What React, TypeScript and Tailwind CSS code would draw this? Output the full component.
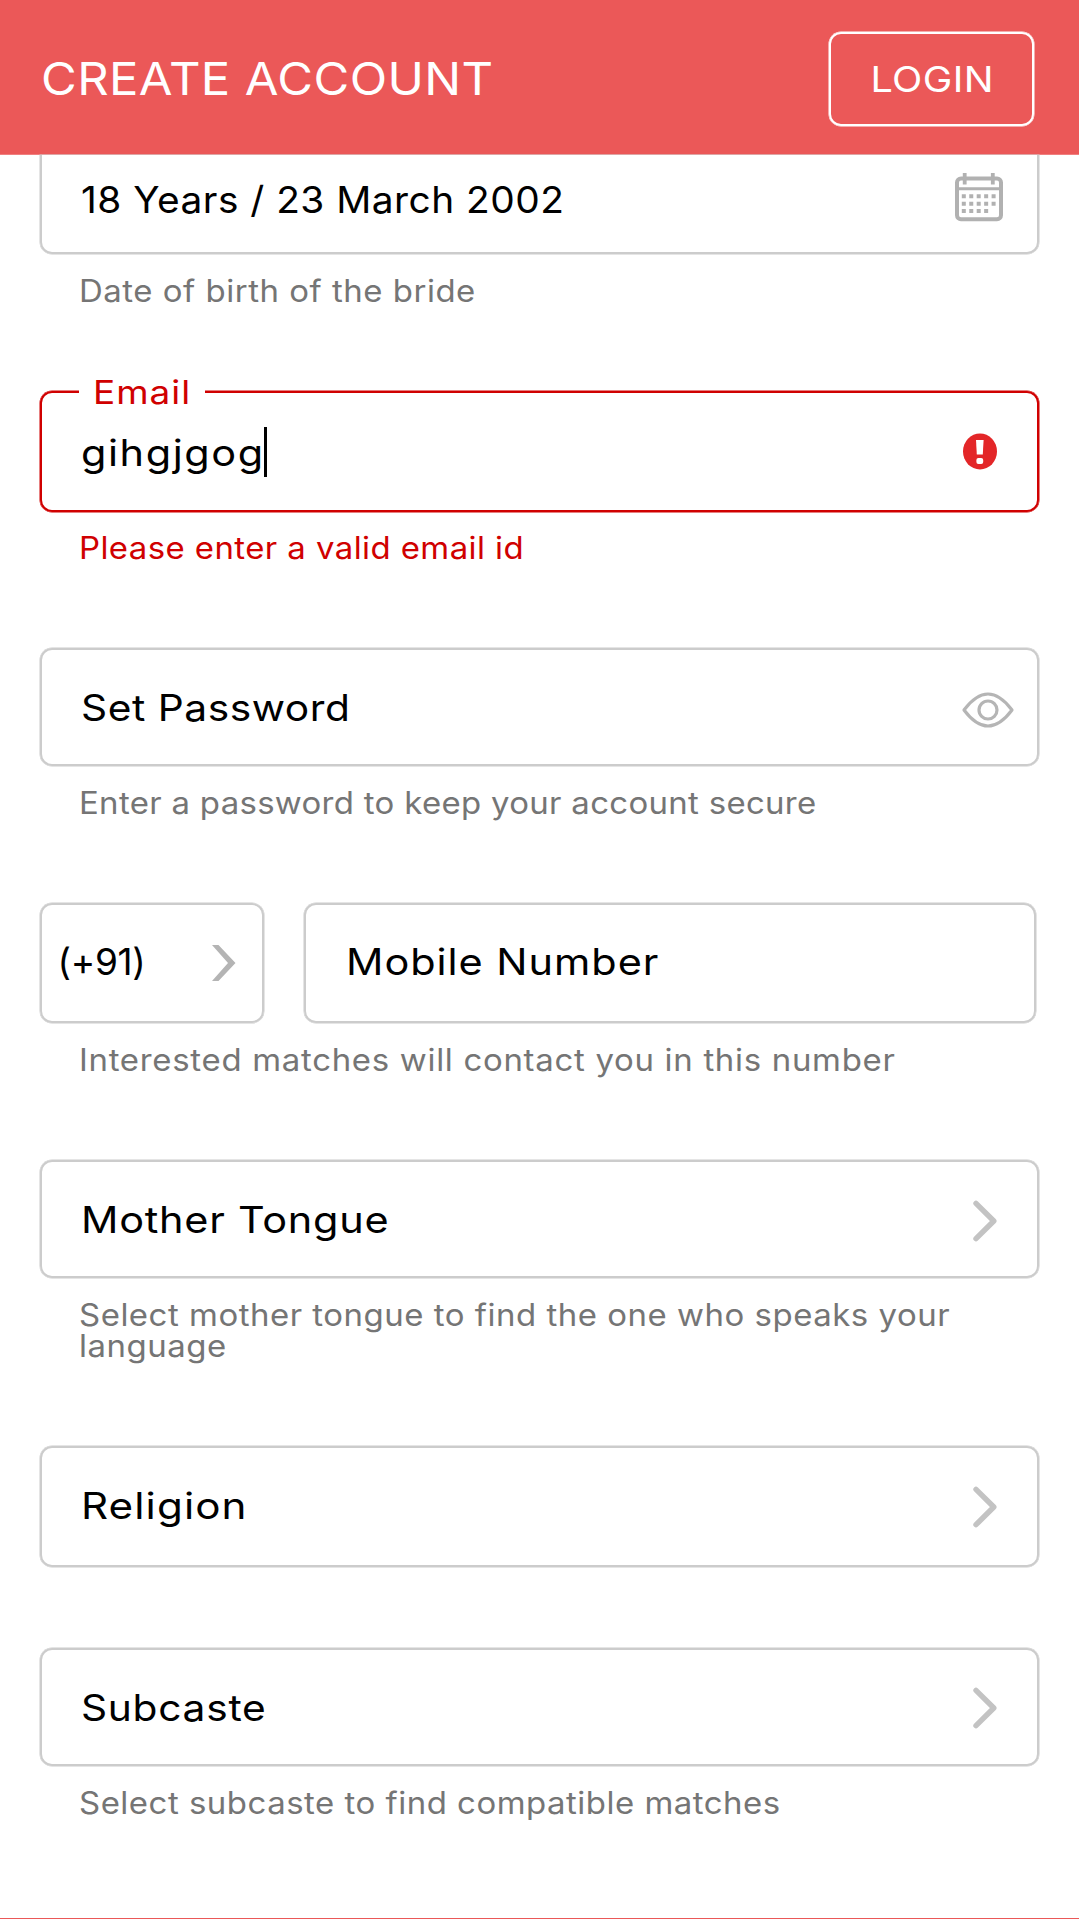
import type { ReactNode } from "react";
import clsx from "clsx";

function CalendarIcon() {
  return (
    <svg width="48" height="49" viewBox="0 0 48 49" fill="none" stroke="#b1b1b1">
      <rect x="2" y="5.5" width="44" height="40.7" rx="4" strokeWidth="4" />
      <path d="M2 15.800h44" strokeWidth="3" />
      <path d="M9.700 0v11.500M37.800 0v11.500" strokeWidth="3.800" />
      <g strokeWidth="4" strokeDasharray="4 3.450">
        <path d="M6.800 23.300h34" />
        <path d="M6.800 30.700h34" />
        <path d="M6.800 38.100h27" />
      </g>
    </svg>
  );
}

function ErrorIcon() {
  return (
    <svg width="35" height="37" viewBox="0 0 35 37">
      <ellipse cx="17" cy="18.4" rx="17" ry="18" fill="#e32628" />
      <path d="M13 7h7.600l-.8 14.500h-6z" fill="#fff" />
      <rect x="13.400" y="25" width="6.800" height="6" rx="2" fill="#fff" />
    </svg>
  );
}

function EyeIcon() {
  return (
    <svg width="52" height="36" viewBox="0 0 52 36" fill="none" stroke="#b5b5b5" strokeWidth="3.2">
      <path d="M2 18C9.500 8 17.500 2 26 2s16.500 6 24 16c-7.500 10-15.500 16-24 16S9.500 28 2 18z" strokeLinejoin="round" />
      <circle cx="26" cy="18" r="9" />
    </svg>
  );
}

function Chevron() {
  return (
    <svg width="24" height="42" viewBox="0 0 24 42" fill="none" stroke="#c3c3c3" strokeWidth="5.4" strokeLinecap="round" strokeLinejoin="round">
      <path d="M3 3.300 20.800 21 3 38.700" />
    </svg>
  );
}

function SharpChevron() {
  return (
    <svg width="24" height="38" viewBox="0 0 24 38" fill="#b4b4b4">
      <path d="M0 1h6.500L23.500 19 6.500 37H0l16-18z" />
    </svg>
  );
}

function Field({
  className,
  boxClass,
  text,
  textClass,
  icon,
  helper,
  helperClass,
  label,
  error,
  caret,
}: {
  className: string;
  boxClass: string;
  text: string;
  textClass: string;
  icon: ReactNode;
  helper?: string;
  helperClass?: string;
  label?: string;
  error?: boolean;
  caret?: boolean;
}) {
  return (
    <div className={className}>
      <div
        className={clsx(
          "relative ml-10 flex w-[999px] items-center justify-between border-2 pl-[39px]",
          error ? "border-[#d00000] shadow-[0_0_0_0.5px_#d00000]" : "border-[#cccccc] shadow-[0_0_0_0.5px_#cccccc]",
          boxClass,
        )}
      >
        {label && (
          <span className="absolute -top-[21px] left-[37px] w-[126px] bg-white pl-[14px] text-[33px] leading-[40px] text-[#d00000]">
            <span className="inline-block origin-left scale-x-[1.12] tracking-[0.87px]">{label}</span>
          </span>
        )}
        <span className="flex items-center">
          <span className={clsx("inline-block origin-left text-[37px] leading-[50px] whitespace-nowrap text-black", textClass)}>
            {text}
          </span>
          {caret && <span className="ml-[19px] h-[50px] w-[3px] bg-black" />}
        </span>
        {icon}
      </div>
      {helper && (
        <p
          className={clsx(
            "ml-[79px] w-[820px] origin-left scale-x-[1.08] text-[30.5px] leading-[31px]",
            error ? "text-[#d00000]" : "text-[#757575]",
            helperClass,
          )}
        >
          {helper}
        </p>
      )}
    </div>
  );
}

export default function App() {
  return (
    <div className="flex h-[1919px] w-[1079px] flex-col overflow-hidden bg-white font-['Inter',sans-serif]">
      <header className="flex h-[155px] shrink-0 items-center justify-between border-b border-[#f07f7f] bg-[#eb5858] pr-[45px] pl-[41px] text-white">
        <h1 className="mt-[4px] origin-left scale-x-[1.1] text-[44.5px] leading-[54px] tracking-[0.36px]">CREATE ACCOUNT</h1>
        <button className="mt-[3px] flex h-[94px] w-[205px] items-center justify-center rounded-[12px] border-2 border-white pl-[1px] text-[36px] shadow-[0_0_0_0.5px_white]">
          <span className="inline-block scale-x-[1.1] tracking-[0.38px]">LOGIN</span>
        </button>
      </header>

      <main className="grow">
        <Field
          className="h-[236px]"
          boxClass="h-[99px] rounded-b-[12px] border-t-0 pr-[34px]"
          text="18 Years / 23 March 2002"
          textClass="-mt-[8px] scale-x-[1.05] tracking-[0.45px]"
          icon={<div className="-mt-[13px]"><CalendarIcon /></div>}
          helper="Date of birth of the bride"
          helperClass="mt-[21px] tracking-[0.48px]"
        />
        <Field
          className="h-[257px]"
          boxClass="h-[121px] rounded-[12px] pr-[39px]"
          text="gihgjgog"
          textClass="mt-[3px] scale-x-[1.12] tracking-[1.4px]"
          icon={<ErrorIcon />}
          label="Email"
          error
          caret
          helper="Please enter a valid email id"
          helperClass="mt-[20px] tracking-[0.39px]"
        />
        <Field
          className="h-[255px]"
          boxClass="h-[118px] rounded-[12px] pr-[23px]"
          text="Set Password"
          textClass="mt-[2px] scale-x-[1.1] tracking-[0.49px]"
          icon={<div className="mt-[6px]"><EyeIcon /></div>}
          helper="Enter a password to keep your account secure"
          helperClass="mt-[21px] tracking-[0.29px]"
        />

        <div className="h-[257px]">
          <div className="ml-10 flex gap-[40px]">
            <div className="flex h-[120px] w-[224px] items-center justify-between rounded-[12px] border-2 border-[#cccccc] pr-[26px] pl-[15.5px] shadow-[0_0_0_0.5px_#cccccc]">
              <span className="-mt-[2px] text-[37px] leading-[50px] tracking-[-0.3px]">(+91)</span>
              <SharpChevron />
            </div>
            <div className="flex h-[120px] w-[732px] items-center rounded-[12px] border-2 border-[#cccccc] pl-[40px] shadow-[0_0_0_0.5px_#cccccc]">
              <span className="-mt-[2px] inline-block origin-left scale-x-[1.12] text-[37px] leading-[50px] tracking-[0.87px]">
                Mobile Number
              </span>
            </div>
          </div>
          <p className="mt-[21px] ml-[79px] w-[820px] origin-left scale-x-[1.08] text-[30.5px] leading-[31px] tracking-[0.65px] text-[#757575]">
            Interested matches will contact you in this number
          </p>
        </div>

        <Field
          className="h-[286px]"
          boxClass="h-[118px] rounded-[12px] pr-[40.5px]"
          text="Mother Tongue"
          textClass="mt-[2px] scale-x-[1.12] tracking-[0.66px]"
          icon={<div className="mt-[3px]"><Chevron /></div>}
          helper="Select mother tongue to find the one who speaks your language"
          helperClass="mt-[21px] tracking-[0.48px]"
        />
        <Field
          className="h-[202px]"
          boxClass="h-[121px] rounded-[12px] pr-[40.5px]"
          text="Religion"
          textClass="-mt-[1px] scale-x-[1.14] tracking-[0.96px]"
          icon={<Chevron />}
        />
        <Field
          className="h-[180px]"
          boxClass="h-[118px] rounded-[12px] pr-[40.5px]"
          text="Subcaste"
          textClass="mt-[2px] scale-x-[1.1] tracking-[0.65px]"
          icon={<div className="mt-[2px]"><Chevron /></div>}
          helper="Select subcaste to find compatible matches"
          helperClass="mt-[21px] tracking-[0.47px]"
        />
      </main>
      <div className="h-px shrink-0 bg-[#eb5858]" />
    </div>
  );
}
